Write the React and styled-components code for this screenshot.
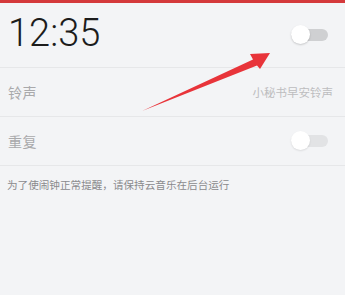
import React from 'react'
import styled, { createGlobalStyle } from 'styled-components'

const GlobalStyle = createGlobalStyle`
  html, body {
    margin: 0;
    padding: 0;
    background: #f3f4f6;
  }
  body {
    font-family: Roboto, "Noto Sans CJK SC", sans-serif;
  }
`

const Screen = styled.div`
  position: relative;
  width: 345px;
  height: 295px;
  background: #f3f4f6;
  overflow: hidden;
`

const TopBar = styled.div`
  height: 3px;
  background: #d4393b;
`

const TimeRow = styled.div`
  display: flex;
  align-items: center;
  justify-content: space-between;
  height: 64px;
  padding: 0 17px 0 8px;
  border-bottom: 1px solid #e6e7e9;
`

const Time = styled.div`
  font-family: Roboto, sans-serif;
  font-weight: 300;
  font-size: 38px;
  color: #1c1c1c;
  margin-top: -4px;
`

const Row = styled.div`
  display: flex;
  align-items: center;
  justify-content: space-between;
  height: ${props => props.height}px;
  padding: 0 ${props => props.right}px 0 8px;
  border-bottom: 1px solid #e6e7e9;
`

const Label = styled.div`
  font-family: "Noto Sans CJK SC", sans-serif;
  font-size: 14px;
  color: #a9a9ab;
  letter-spacing: 0.5px;
`

const Value = styled.div`
  font-family: "Noto Sans CJK SC", sans-serif;
  font-size: 11.5px;
  color: #bdbdbf;
`

const Track = styled.div`
  position: relative;
  width: 37px;
  height: 12px;
  border-radius: 6px;
  background: ${props => props.dim ? '#e2e3e5' : '#cfd0d2'};
`

const Knob = styled.div`
  position: absolute;
  left: 0;
  top: -4px;
  width: 19px;
  height: 19px;
  border-radius: 50%;
  background: #fff;
  box-shadow: 0 1px 2px rgba(0, 0, 0, ${props => props.dim ? 0.1 : 0.18});
`

const Note = styled.div`
  padding: 11px 7px 0;
  font-family: "Noto Sans CJK SC", sans-serif;
  font-size: 10.6px;
  color: #8a8a8d;
`

const Arrow = styled.svg`
  position: absolute;
  left: 0;
  top: 0;
  pointer-events: none;
`

const Switch = ({ dim }) => (
  <Track dim={dim}>
    <Knob dim={dim} />
  </Track>
)

export default function App () {
  return (
    <Screen>
      <GlobalStyle />
      <TopBar />
      <TimeRow>
        <Time>12:35</Time>
        <Switch />
      </TimeRow>
      <Row height={48} right={12}>
        <Label>铃声</Label>
        <Value>小秘书早安铃声</Value>
      </Row>
      <Row height={48} right={17}>
        <Label>重复</Label>
        <Switch dim />
      </Row>
      <Note>为了使闹钟正常提醒，请保持云音乐在后台运行</Note>
      <Arrow width='345' height='295' viewBox='0 0 345 295'>
        <polygon
          points='142,111 253,59.5 250,54 270,53 260,69 257,65.5'
          fill='#e8343a'
        />
      </Arrow>
    </Screen>
  )
}
